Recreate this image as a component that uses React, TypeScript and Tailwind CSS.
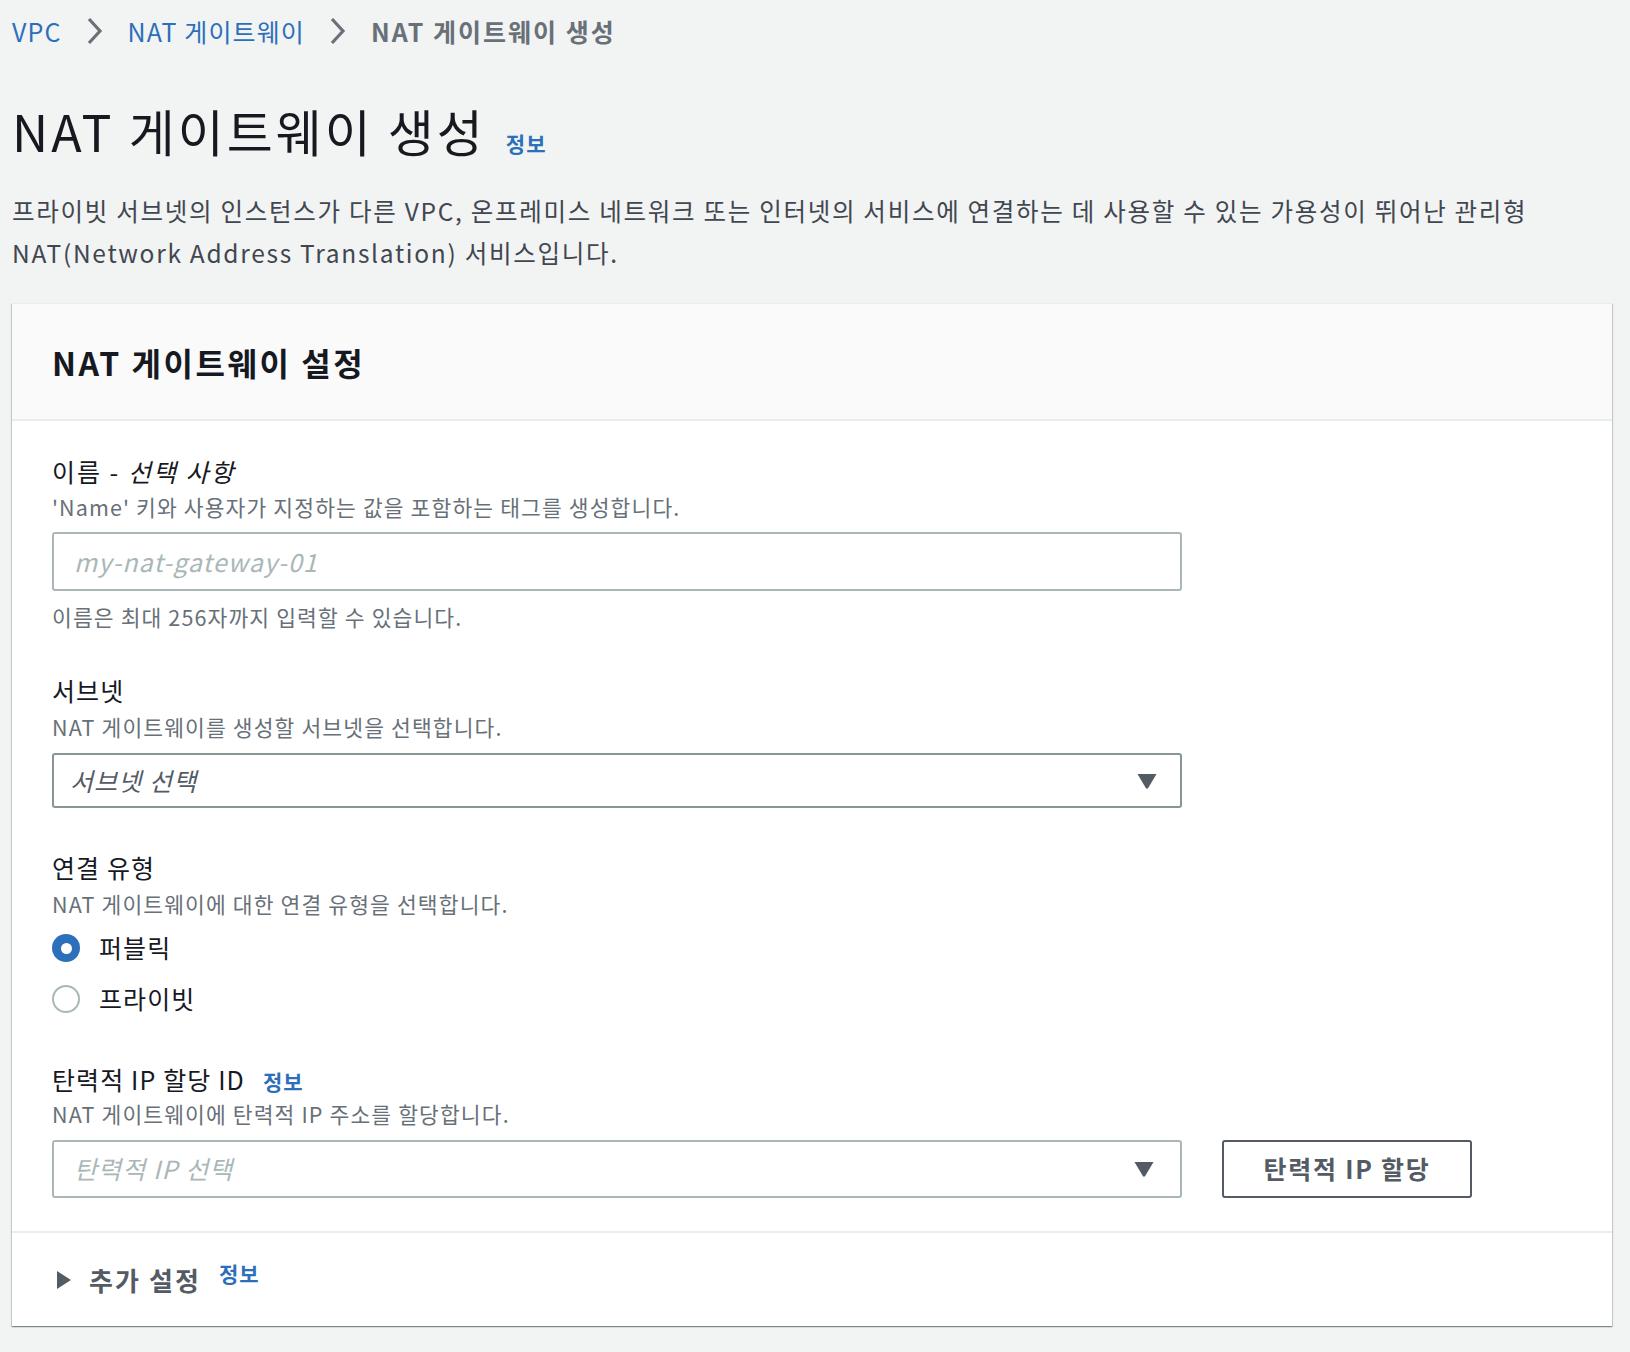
import React from "react";

const FONT = { fontFamily: '"Noto Sans CJK KR", "Noto Sans", sans-serif' };

function Chevron() {
  return (
    <svg width="22" height="30" viewBox="0 0 22 30" className="mx-[22px]">
      <polyline points="5,3 16,15 5,27" fill="none" stroke="#687078" strokeWidth="3.2" strokeLinejoin="miter" />
    </svg>
  );
}

function Caret() {
  return (
    <svg width="22" height="18" viewBox="0 0 22 18">
      <path d="M1.5 2 H20.5 L12.2 16 Q11 17.6 9.8 16 Z" fill="#545b64" />
    </svg>
  );
}

function Info({ className = "" }: { className?: string }) {
  return <span className={`text-[21px] font-bold tracking-[0.05em] text-[#2c6fba] ${className}`}>정보</span>;
}

export default function App() {
  return (
    <div style={FONT} className="min-h-[1352px] w-full bg-[#f2f3f3] px-[12px] pt-[13px] tracking-[0.07em] text-[#16191f]">
      {/* breadcrumb */}
      <div className="flex h-[36px] items-center text-[25px] leading-[36px]">
        <span className="text-[#2c6fba]">VPC</span>
        <Chevron />
        <span className="text-[#2c6fba]">NAT 게이트웨이</span>
        <Chevron />
        <span className="font-bold tracking-[0.08em] text-[#687078]">NAT 게이트웨이 생성</span>
      </div>

      {/* title */}
      <div className="mt-[51px] flex h-[60px] items-baseline">
        <h1 className="text-[50px] font-normal leading-[60px] tracking-[0.06em] text-[#16191f]">NAT 게이트웨이 생성</h1>
        <Info className="ml-[20px]" />
      </div>

      <p className="mt-[30px] max-w-[1600px] text-[24.5px] leading-[42px] tracking-[0.07em] text-[#414750]">
        프라이빗 서브넷의 인스턴스가 다른 VPC, 온프레미스 네트워크 또는 인터넷의 서비스에 연결하는 데 사용할 수 있는 가용성이 뛰어난 관리형
        <br />
        NAT(Network Address Translation) 서비스입니다.
      </p>

      {/* card */}
      <div className="mt-[29px] w-[1600px] border-t border-[#eaeded] bg-white shadow-[0_1px_1px_0_rgba(0,28,36,0.3),1px_1px_1px_0_rgba(0,28,36,0.15),-1px_1px_1px_0_rgba(0,28,36,0.15)]">
        <div className="flex h-[117px] items-center border-b-2 border-[#eaeded] bg-[#fafafa] px-[40px]">
          <h2 className="text-[32px] font-bold leading-[40px] tracking-[0.08em] text-[#16191f]">NAT 게이트웨이 설정</h2>
        </div>

        <div className="px-[40px] pt-[34px] pb-[33px]">
          {/* name */}
          <div className="text-[25px] leading-[32px] tracking-[0.08em] text-[#16191f]">
            이름 - <span className="italic">선택 사항</span>
          </div>
          <div className="mt-[6px] text-[21.5px] leading-[28px] text-[#687078]">
            'Name' 키와 사용자가 지정하는 값을 포함하는 태그를 생성합니다.
          </div>
          <div className="mt-[11px] flex h-[59px] w-[1130px] items-center rounded-[3px] border-2 border-[#aab7b8] px-[20px]">
            <span className="text-[25px] italic text-[#aab7b8]">my-nat-gateway-01</span>
          </div>
          <div className="mt-[12px] text-[21.5px] leading-[28px] text-[#687078]">
            이름은 최대 256자까지 입력할 수 있습니다.
          </div>

          {/* subnet */}
          <div className="mt-[43px] text-[25px] leading-[32px] text-[#16191f]">서브넷</div>
          <div className="mt-[7px] text-[21.5px] leading-[28px] text-[#687078]">
            NAT 게이트웨이를 생성할 서브넷을 선택합니다.
          </div>
          <div className="mt-[12px] flex h-[55px] w-[1130px] items-center justify-between rounded-[3px] border-2 border-[#879596] pl-[16px] pr-[22px]">
            <span className="text-[25px] italic text-[#545b64]">서브넷 선택</span>
            <Caret />
          </div>

          {/* connection type */}
          <div className="mt-[43px] text-[25px] leading-[32px] text-[#16191f]">연결 유형</div>
          <div className="mt-[7px] text-[21.5px] leading-[28px] text-[#687078]">
            NAT 게이트웨이에 대한 연결 유형을 선택합니다.
          </div>
          <div className="mt-[10px] flex h-[40px] items-center">
            <span className="flex h-[28px] w-[28px] items-center justify-center rounded-full bg-[#2c6fba]">
              <span className="h-[11px] w-[11px] rounded-full bg-white" />
            </span>
            <span className="ml-[19px] text-[25px] text-[#16191f]">퍼블릭</span>
          </div>
          <div className="mt-[11px] flex h-[40px] items-center">
            <span className="h-[28px] w-[28px] rounded-full border-2 border-[#aab7b8] bg-white" />
            <span className="ml-[19px] text-[25px] text-[#16191f]">프라이빗</span>
          </div>

          {/* EIP */}
          <div className="mt-[44px] flex h-[32px] items-baseline text-[25px] leading-[32px] text-[#16191f]">
            탄력적 IP 할당 ID
            <Info className="ml-[18px]" />
          </div>
          <div className="mt-[5px] text-[21.5px] leading-[28px] text-[#687078]">
            NAT 게이트웨이에 탄력적 IP 주소를 할당합니다.
          </div>
          <div className="mt-[12px] flex items-center">
            <div className="flex h-[58px] w-[1130px] items-center justify-between rounded-[3px] border-2 border-[#aab7b8] pl-[20px] pr-[25px]">
              <span className="text-[25px] italic text-[#aab7b8]">탄력적 IP 선택</span>
              <Caret />
            </div>
            <button className="ml-[40px] flex h-[58px] w-[250px] items-center justify-center rounded-[3px] border-2 border-[#545b64] bg-white text-[25px] font-bold tracking-[0.07em] text-[#545b64]">
              탄력적 IP 할당
            </button>
          </div>
        </div>

        {/* additional settings */}
        <div className="flex h-[95px] items-center border-t-2 border-[#eaeded] px-[44px]">
          <svg width="16" height="20" viewBox="0 0 16 20">
            <path d="M1 1 L15 10 L1 19 Z" fill="#545b64" />
          </svg>
          <span className="ml-[17px] text-[26px] font-bold tracking-[0.08em] text-[#545b64]">추가 설정</span>
          <Info className="ml-[18px] -mt-[12px]" />
        </div>
      </div>
    </div>
  );
}
